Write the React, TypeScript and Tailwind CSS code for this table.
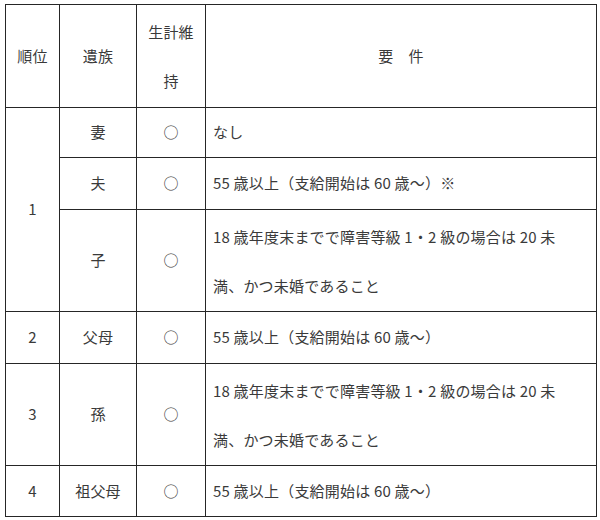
import React from 'react'

const font = { fontFamily: '"Noto Sans CJK JP", "Noto Sans", sans-serif' }

const cell = "border border-[#262626] text-center align-middle p-0"
const req = "border border-[#262626] text-left align-middle pl-[7px] pr-0 py-0"

const longReq = (
  <>
    18 歳年度末までで障害等級 1・2 級の場合は 20 未<br />
    満、かつ未婚であること
  </>
)
const ageReq = '55 歳以上（支給開始は 60 歳〜）'

export default function App() {
  return (
    <div className="w-[600px] h-[520px] bg-white pl-[5px] pt-[4px]">
      <table className="table-fixed border-collapse w-[592px] text-[15px] tracking-[0.2px] text-[#3a3a3a]" style={font}>
        <colgroup>
          <col className="w-[54px]" />
          <col className="w-[77px]" />
          <col className="w-[69px]" />
          <col />
        </colgroup>
        <tbody>
          <tr className="h-[103px]">
            <td className={cell}>順位</td>
            <td className={cell}>遺族</td>
            <td className={cell + ' leading-[49px]'}>生計維<br />持</td>
            <td className={cell}>要　件</td>
          </tr>
          <tr className="h-[50px]">
            <td className={cell} rowSpan={3}>1</td>
            <td className={cell}>妻</td>
            <td className={cell}>○</td>
            <td className={req}>なし</td>
          </tr>
          <tr className="h-[52px]">
            <td className={cell}>夫</td>
            <td className={cell}>○</td>
            <td className={req}>{ageReq}※</td>
          </tr>
          <tr className="h-[102px]">
            <td className={cell}>子</td>
            <td className={cell}>○</td>
            <td className={req + ' leading-[49px]'}>{longReq}</td>
          </tr>
          <tr className="h-[52px]">
            <td className={cell}>2</td>
            <td className={cell}>父母</td>
            <td className={cell}>○</td>
            <td className={req}>{ageReq}</td>
          </tr>
          <tr className="h-[102px]">
            <td className={cell}>3</td>
            <td className={cell}>孫</td>
            <td className={cell}>○</td>
            <td className={req + ' leading-[49px]'}>{longReq}</td>
          </tr>
          <tr className="h-[51px]">
            <td className={cell}>4</td>
            <td className={cell}>祖父母</td>
            <td className={cell}>○</td>
            <td className={req}>{ageReq}</td>
          </tr>
        </tbody>
      </table>
    </div>
  )
}
